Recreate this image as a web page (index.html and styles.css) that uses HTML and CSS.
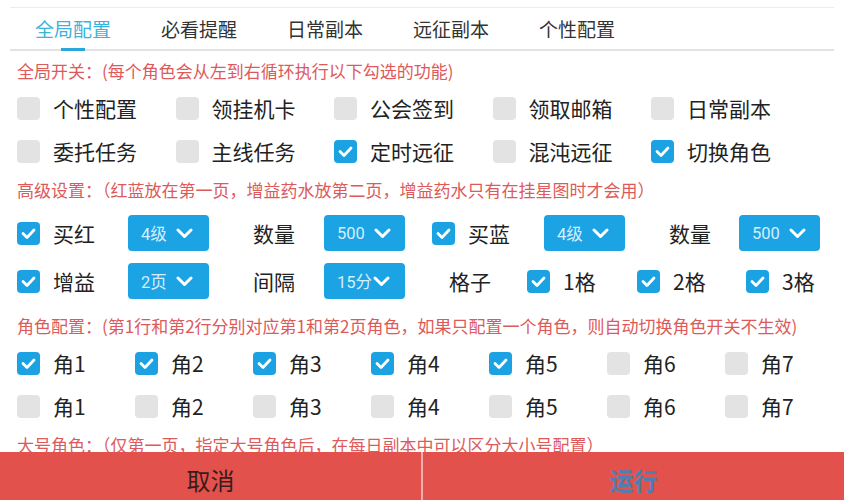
FILE: index.html
```html
<!DOCTYPE html>
<html lang="zh">
<head>
<meta charset="utf-8">
<title>配置</title>
<link rel="stylesheet" href="styles.css">
</head>
<body>
<div class="page">
  <nav class="tabs">
    <div class="tab active">全局配置</div>
    <div class="tab">必看提醒</div>
    <div class="tab">日常副本</div>
    <div class="tab">远征副本</div>
    <div class="tab">个性配置</div>
  </nav>

  <div class="content">
    <div class="sec-title t1">全局开关：(每个角色会从左到右循环执行以下勾选的功能)</div>
    <div class="grid5">
      <label class="opt"><span class="cb"></span>个性配置</label>
      <label class="opt"><span class="cb"></span>领挂机卡</label>
      <label class="opt"><span class="cb"></span>公会签到</label>
      <label class="opt"><span class="cb"></span>领取邮箱</label>
      <label class="opt"><span class="cb"></span>日常副本</label>
      <label class="opt"><span class="cb"></span>委托任务</label>
      <label class="opt"><span class="cb"></span>主线任务</label>
      <label class="opt"><span class="cb on"><svg viewBox="0 0 23 23"><polyline points="6,11.5 10,15.5 17,8"/></svg></span>定时远征</label>
      <label class="opt"><span class="cb"></span>混沌远征</label>
      <label class="opt"><span class="cb on"><svg viewBox="0 0 23 23"><polyline points="6,11.5 10,15.5 17,8"/></svg></span>切换角色</label>
    </div>

    <div class="sec-title t2">高级设置：（红蓝放在第一页，增益药水放第二页，增益药水只有在挂星图时才会用）</div>
    <div class="adv adv1">
      <label class="opt"><span class="cb on"><svg viewBox="0 0 23 23"><polyline points="6,11.5 10,15.5 17,8"/></svg></span>买红</label>
      <div class="sel"><span>4级</span><svg viewBox="0 0 17 11"><polyline points="2,2 8.5,8.5 15,2"/></svg></div>
      <div class="lbl">数量</div>
      <div class="sel"><span>500</span><svg viewBox="0 0 17 11"><polyline points="2,2 8.5,8.5 15,2"/></svg></div>
      <label class="opt"><span class="cb on"><svg viewBox="0 0 23 23"><polyline points="6,11.5 10,15.5 17,8"/></svg></span>买蓝</label>
      <div class="sel"><span>4级</span><svg viewBox="0 0 17 11"><polyline points="2,2 8.5,8.5 15,2"/></svg></div>
      <div class="lbl">数量</div>
      <div class="sel"><span>500</span><svg viewBox="0 0 17 11"><polyline points="2,2 8.5,8.5 15,2"/></svg></div>
    </div>
    <div class="adv adv2">
      <label class="opt"><span class="cb on"><svg viewBox="0 0 23 23"><polyline points="6,11.5 10,15.5 17,8"/></svg></span>增益</label>
      <div class="sel"><span>2页</span><svg viewBox="0 0 17 11"><polyline points="2,2 8.5,8.5 15,2"/></svg></div>
      <div class="lbl">间隔</div>
      <div class="sel tight"><span>15分</span><svg viewBox="0 0 17 11"><polyline points="2,2 8.5,8.5 15,2"/></svg></div>
      <div class="lbl">格子</div>
      <label class="opt"><span class="cb on"><svg viewBox="0 0 23 23"><polyline points="6,11.5 10,15.5 17,8"/></svg></span>1格</label>
      <label class="opt"><span class="cb on"><svg viewBox="0 0 23 23"><polyline points="6,11.5 10,15.5 17,8"/></svg></span>2格</label>
      <label class="opt"><span class="cb on"><svg viewBox="0 0 23 23"><polyline points="6,11.5 10,15.5 17,8"/></svg></span>3格</label>
    </div>

    <div class="sec-title t3">角色配置：(第1行和第2行分别对应第1和第2页角色，如果只配置一个角色，则自动切换角色开关不生效)</div>
    <div class="grid7">
      <label class="opt"><span class="cb on"><svg viewBox="0 0 23 23"><polyline points="6,11.5 10,15.5 17,8"/></svg></span>角1</label>
      <label class="opt"><span class="cb on"><svg viewBox="0 0 23 23"><polyline points="6,11.5 10,15.5 17,8"/></svg></span>角2</label>
      <label class="opt"><span class="cb on"><svg viewBox="0 0 23 23"><polyline points="6,11.5 10,15.5 17,8"/></svg></span>角3</label>
      <label class="opt"><span class="cb on"><svg viewBox="0 0 23 23"><polyline points="6,11.5 10,15.5 17,8"/></svg></span>角4</label>
      <label class="opt"><span class="cb on"><svg viewBox="0 0 23 23"><polyline points="6,11.5 10,15.5 17,8"/></svg></span>角5</label>
      <label class="opt"><span class="cb"></span>角6</label>
      <label class="opt"><span class="cb"></span>角7</label>
      <label class="opt"><span class="cb"></span>角1</label>
      <label class="opt"><span class="cb"></span>角2</label>
      <label class="opt"><span class="cb"></span>角3</label>
      <label class="opt"><span class="cb"></span>角4</label>
      <label class="opt"><span class="cb"></span>角5</label>
      <label class="opt"><span class="cb"></span>角6</label>
      <label class="opt"><span class="cb"></span>角7</label>
    </div>

    <div class="sec-title t4">大号角色：（仅第一页，指定大号角色后，在每日副本中可以区分大小号配置）</div>
  </div>

  <footer class="actions">
    <button class="btn cancel">取消</button>
    <button class="btn run">运行</button>
  </footer>
</div>
</body>
</html>
```

FILE: styles.css
```css
* { box-sizing: border-box; }

html, body {
  margin: 0;
  padding: 0;
  background: #ffffff;
}

body {
  font-family: "Noto Sans CJK SC", "Noto Sans", sans-serif;
  color: #222222;
}

.page {
  position: relative;
  width: 844px;
  height: 500px;
  overflow: hidden;
  padding-top: 7px;
}

.tabs {
  display: grid;
  grid-template-columns: repeat(5, 126px);
  margin: 0 10px;
  height: 44px;
  border-top: 1px solid #ececec;
  border-bottom: 2px solid #e2e2e2;
}

.tab {
  position: relative;
  display: flex;
  align-items: center;
  justify-content: center;
  font-size: 19px;
  color: #333333;
  padding-bottom: 1px;
}

.tab.active {
  color: #3bb2dc;
}

.tab.active::after {
  content: "";
  position: absolute;
  left: 50%;
  bottom: -2px;
  width: 24px;
  margin-left: -12px;
  height: 3px;
  background: #2aa7d8;
}

.content {
  padding-left: 17px;
}

.sec-title {
  height: 24px;
  line-height: 24px;
  font-size: 17px;
  color: #dd5a5a;
  white-space: nowrap;
}

.t1 { margin-top: 8px; }
.t2 { margin-top: 5px; }
.t3 { margin-top: 9px; }
.t4 { margin-top: 5px; }

.opt {
  display: flex;
  align-items: center;
  gap: 13px;
  font-size: 21px;
  color: #222222;
  white-space: nowrap;
  line-height: 1;
}

.cb {
  flex: none;
  width: 23px;
  height: 23px;
  border-radius: 4px;
  background: #e3e3e3;
  display: flex;
  align-items: center;
  justify-content: center;
}

.cb.on {
  background: #1ba2e2;
}

.cb svg {
  width: 23px;
  height: 23px;
  fill: none;
  stroke: #ffffff;
  stroke-width: 2.8;
  stroke-linecap: round;
  stroke-linejoin: round;
}

.grid5 {
  display: grid;
  grid-template-columns: repeat(5, 158.5px);
  grid-auto-rows: 43px;
  margin-top: 4px;
}

.grid7 {
  display: grid;
  grid-template-columns: repeat(7, 118px);
  grid-auto-rows: 43px;
  margin-top: 4px;
}

.adv {
  display: grid;
  height: 48px;
  align-items: center;
}

.adv1 {
  margin-top: 7px;
  grid-template-columns: 111px 125px 71px 108px 112px 125px 70px 81px;
}

.adv2 {
  grid-template-columns: 111px 125px 71px 125px 78px 110px 109px auto;
}

.lbl {
  font-size: 21px;
  color: #222222;
  line-height: 1;
}

.sel {
  width: 81px;
  height: 36px;
  border-radius: 4px;
  background: #1ba3e4;
  display: flex;
  align-items: center;
  gap: 9px;
  padding-left: 13px;
  font-size: 16.5px;
  color: #d6eefb;
  font-family: "Roboto", "Noto Sans CJK SC", sans-serif;
}

.sel.tight {
  gap: 1px;
}

.sel svg {
  width: 17px;
  height: 11px;
  fill: none;
  stroke: #ffffff;
  stroke-width: 3;
  stroke-linecap: round;
  stroke-linejoin: round;
}

.actions {
  position: absolute;
  left: 0;
  right: 0;
  bottom: 0;
  height: 48px;
  display: flex;
  background: #e2514c;
}

.btn {
  flex: 1;
  border: none;
  margin: 0;
  background: #e2514c;
  font-family: "Noto Sans CJK SC", sans-serif;
  font-size: 24px;
  padding: 6px 0 0;
}

.cancel {
  color: #3a1c1c;
  border-right: 2px solid #f2b0ad;
}

.run {
  color: #4f7fb2;
  font-weight: bold;
}
```
